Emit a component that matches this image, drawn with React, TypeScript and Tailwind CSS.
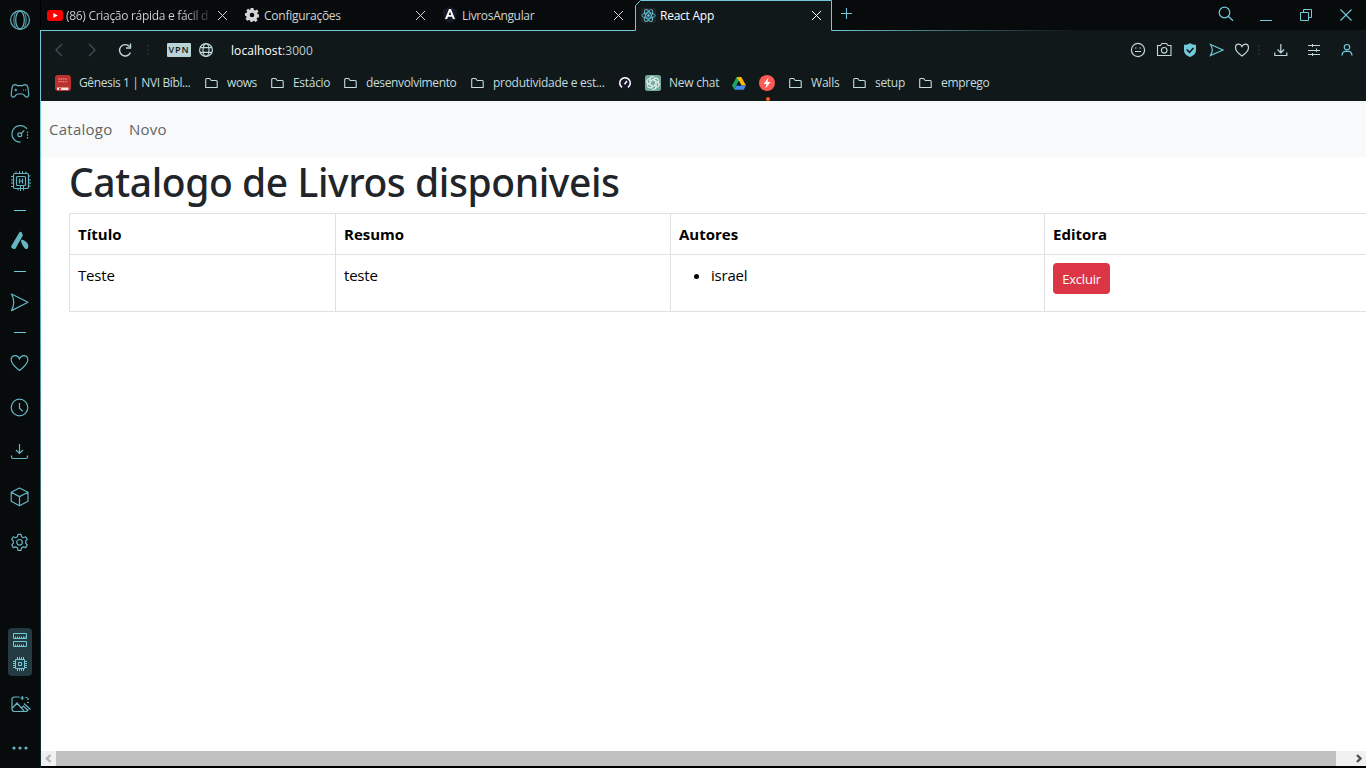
import React from 'react';

type Kids = { children?: React.ReactNode };

function Icon({ w = 20, h = 20, cls = '', sw = 1.2, children }: Kids & { w?: number; h?: number; cls?: string; sw?: number }) {
  return (
    <svg width={w} height={h} viewBox={`0 0 ${w} ${h}`} className={`block shrink-0 ${cls}`} fill="none" stroke="currentColor" strokeWidth={sw}>
      {children}
    </svg>
  );
}

const Dash = ({ cls }: { cls: string }) => <div className={`h-px w-3 shrink-0 bg-[#71c9d9] ${cls}`} />;

function Sidebar() {
  return (
    <aside className="flex h-[768px] w-10 shrink-0 flex-col items-center bg-[#080b0c] text-[#65b5c3]">
      <Icon cls="mt-[10px]">
        <circle cx="10" cy="10" r="9.4" />
        <ellipse cx="10" cy="10" rx="4.3" ry="8.8" />
        <path d="M5.8 2.3C3.2 6 3.2 14 5.8 17.7M14.2 2.3c2.6 3.7 2.6 11.7 0 15.4" strokeWidth="0.9" />
      </Icon>
      <Icon cls="mt-[51px]">
        <path d="M5.500 3.700c-2.200 0-3 .8-3.400 2.800L1.300 12.500c-.3 2.400.6 3.700 2 3.700 2.100 0 2.500-3.200 4.200-3.200h5c1.700 0 2.100 3.200 4.200 3.200 1.400 0 2.300-1.300 2-3.700L17.900 6.500c-.4-2-1.200-2.800-3.400-2.800-1.200 0-1.500.9-2.500.9H8c-1 0-1.300-.9-2.500-.9z" />
        <path d="M5.800 7.700v2.600M4.500 9h2.600M13 9h1M15 9h1" />
      </Icon>
      <Icon cls="mt-[23px]">
        <path d="M17 5A8.300 8.300 0 1 0 10.500 18.200" />
        <circle cx="9.800" cy="10.800" r="1.900" />
        <path d="m11.300 9.300 3-3" />
        <path d="M17.500 7.500v7" strokeDasharray="1.500 1.300" />
      </Icon>
      <Icon w={22} h={22} cls="mt-[26px] ml-[2px]">
        <rect x="3.500" y="3.500" width="15" height="15" rx="1.500" />
        <rect x="6.500" y="6.500" width="9" height="9" rx="1" />
        <path d="M9.500 8.500v5M12.500 8.500v5M9.500 11h3" />
        <path d="M6 1.500v2M9.500 1v2.500M12.500 1v2.500M16 1.500v2M1 6.500h2.500M1 10h2.500M1 13h2.500M1 16.500h2.500M18.500 6h2M18.500 10h2.500M18.500 13h2.500M18.500 16h2M8 18.500v2M10.500 15.500V21M13.500 15.500v5" strokeWidth="1" />
      </Icon>
      <Dash cls="mt-[18px]" />
      <Icon cls="mt-[20px]" sw={0}>
        <path d="M9.300 1.500c.5-1 2-1 2.500 0l.9 2.200c.2.400.1.800-.1 1.200L5.700 17.300c-.5.900-1.400 1-2.200.600l-1.600-1c-.7-.5-.9-1.300-.5-2.100zM12.200 8.700c2.500.300 6.500 3.500 6.200 6.700-.2 2.400-2 3.500-3.500 2-1.500-1.400-4.400-6.500-3.800-8.200.2-.4.600-.5 1.100-.5z" fill="currentColor" />
      </Icon>
      <Dash cls="mt-[20px]" />
      <Icon cls="mt-[20px]"><path d="M1.500 2 18 10.300 1.500 18.600C4.800 12.500 4.800 8 1.500 2z" strokeLinejoin="round" /></Icon>
      <Dash cls="mt-[20px]" />
      <Icon cls="mt-[20px]">
        <path d="M9.500 17.500C5 14 1.200 10.800 1.200 7c0-2.600 1.700-4.300 4-4.300 2 0 3.500 1.200 4.300 3.200.8-2 2.300-3.200 4.300-3.200 2.300 0 4 1.700 4 4.300 0 3.800-3.800 7-8.300 10.500z" />
      </Icon>
      <Icon cls="mt-[25px]">
        <circle cx="9.500" cy="9.500" r="8.300" />
        <path d="M9.500 5v5.200l3.300 3" />
      </Icon>
      <Icon cls="mt-[24px]">
        <path d="M9.500 2v9M6 8l3.500 3.500L13 8M1.500 13.500V15q0 1.500 1.500 1.500h13q1.500 0 1.500-1.500v-1.500" />
      </Icon>
      <Icon cls="mt-[25px]">
        <path d="M9.500 1 18 5.300v9L9.500 18.700 1.200 14.300v-9zM1.200 5.300l8.300 4.300L18 5.300M9.500 9.600v9" strokeLinejoin="round" />
      </Icon>
      <Icon cls="mt-[25px]">
        <circle cx="9.500" cy="10.300" r="2.800" />
        <path d="M8 2.300h3l.6 2.500 1.700.9 2.400-.900 1.500 2.600-1.500 1.800v2l1.500 1.800-1.500 2.600-2.400-.7-1.700.9-.6 2.500H8l-.6-2.500-1.700-.900-2.400.7-1.500-2.600 1.500-1.800v-2L1.800 7.400l1.500-2.600 2.400.900 1.700-.9z" strokeLinejoin="round" />
      </Icon>
      <div className="mt-[76px] flex h-12 w-6 shrink-0 flex-col items-center rounded bg-[#243b42] text-[#71c9d9]">
        <Icon w={14} h={14} cls="mt-[5px]" sw={1}>
          <path d="M.5.500h13v5H.5zM.5 8.500h13v5H.5z" />
          <path d="M2.500 5V3.500M4.500 5V3.500M6.500 5V3.500M8.500 5V3.500M10.500 5V3.500M12 5V3.500M2.500 13v-1.500M4.500 13v-1.500M6.500 13v-1.500M8.500 13v-1.500M10.500 13v-1.500" />
        </Icon>
        <Icon w={14} h={14} cls="mt-[10px]" sw={1}>
          <path d="M2.500 2.500h9v9h-9zM5.500 5.500h3v3h-3z" />
          <path d="M4.500 0v2M6.500 0v2M8.500 0v2M10.500 0v2M4.500 12v2M6.500 12v2M8.500 12v2M10.500 12v2M0 4.500h2M0 6.500h2M0 8.500h2M0 10.500h2M12 4.500h2M12 6.500h2M12 8.500h2M12 10.500h2" />
        </Icon>
      </div>
      <Icon cls="mt-[19px] ml-px">
        <path d="M8.500 2H3.500Q1 2 1 4.500v9.500Q1 16.500 3.500 16.500h11q2.500 0 2.500-2.500M1.500 13 6 8l7 8M10 13.500l2.500-2.500 4.500 4.500M13 8.500l6.500 6M11.300 1v4M9.300 3h4M14.500 2.500h2M17 3v2M16 7.500h2" />
      </Icon>
      <svg width="16" height="4" viewBox="0 0 16 4" className="mt-[31px] block shrink-0" fill="#65b5c3">
        <circle cx="2" cy="2" r="1.600" /><circle cx="8" cy="2" r="1.600" /><circle cx="14" cy="2" r="1.600" />
      </svg>
    </aside>
  );
}

const Close = ({ cls }: { cls: string }) => (
  <Icon w={11} h={11} cls={cls} sw={1}><path d="m1 1 9 9M10 1l-9 9" /></Icon>
);

function Tabs() {
  return (
    <div className="flex h-[31px] shrink-0 bg-[#080b0c] text-xs leading-[31px] text-[#d2d5d6]">
      <div className="flex w-[594px] shrink-0 items-center border-b border-[#71c9d9]">
        <div className="flex w-[198px] items-center">
          <svg width="16" height="11" viewBox="0 0 16 11" className="ml-[6px] block shrink-0"><rect width="16" height="11" rx="3" fill="#f00" /><path d="m6.300 3 4.500 2.500L6.300 8z" fill="#fff" /></svg>
          <span className="ml-[3px] w-[148px] bg-linear-to-r from-[#d2d5d6] from-80% to-[#181b1c] bg-clip-text whitespace-nowrap text-transparent tracking-[-0.3px]">(86) Criação rápida e fácil d</span>
          <Close cls="ml-[3px]" />
        </div>
        <div className="flex w-[198px] items-center">
          <Icon w={14} h={14} cls="ml-[6px]" sw={0}>
            <path fillRule="evenodd" fill="currentColor" d="M5.600 0h2.800l.5 2 1.100.5 2-.9 1.500 1.900L12.200 5l.2 1.100 1.600.5v2.600l-1.900.5-.5 1 .9 1.800-2 1.400-1.600-1.200-1 .300-.6 1H5.600l-.500-1.500-1.100-.5-1.800.800-1.700-2 1.100-1.600L1.400 8.300 0 7.800V5.300l1.700-.5.500-1-.9-1.700L3.400.7 4.800 2l.400-.2zM7 4.700a2.300 2.300 0 1 0 0 4.600 2.300 2.300 0 0 0 0-4.600z" />
          </Icon>
          <span className="ml-[5px] w-[151px] tracking-[-0.25px]">Configurações</span>
          <Close cls="" />
        </div>
        <div className="flex w-[198px] items-center">
          <svg width="14" height="16" viewBox="0 0 14 16" className="ml-[6px] block shrink-0"><path d="M7 0 14 3l-1 10-6 3-6-3L0 3z" fill="#171b27" /><path d="M6 2h2l4 10H9.900L9 9.700H5L4.100 12H2zM7 4.500 5.700 8h2.600z" fill="#fff" fillRule="evenodd" /></svg>
          <span className="ml-[5px] w-[151px] tracking-[-0.33px]">LivrosAngular</span>
          <Close cls="" />
        </div>
      </div>
      <div className="relative flex w-[197px] shrink-0 items-center bg-[#111819] text-white">
        <svg width="198" height="31" viewBox="0 0 198 31" className="absolute top-0 left-0"><path d="M0 0v30.500h.5V5.500L6 .5H0z" fill="#080b0c" /><path d="M-.5 30.500H.5V5.500L5.500.500h191v30h1.500" fill="none" stroke="#71c9d9" /></svg>
        <svg width="15" height="15" viewBox="0 0 15 15" className="relative ml-[6px] block shrink-0" fill="none" stroke="#61c3df" strokeWidth="0.9"><rect width="15" height="15" rx="2" fill="#242424" stroke="none" /><ellipse cx="7.500" cy="7.500" rx="6.600" ry="2.700" /><ellipse cx="7.500" cy="7.500" rx="6.600" ry="2.700" transform="rotate(60 7.500 7.500)" /><ellipse cx="7.500" cy="7.500" rx="6.600" ry="2.700" transform="rotate(120 7.500 7.500)" /><circle cx="7.500" cy="7.500" r="1" fill="#61c3df" /></svg>
        <span className="relative ml-[4px] w-[151px] tracking-[-0.25px]">React App</span>
        <Close cls="relative" />
      </div>
      <div className="flex h-[31px] w-[534px] shrink-0 flex-col">
        <div className="flex h-[30px] text-[#71c9d9]">
          <Icon w={12} h={12} cls="mt-[8px] ml-[9px]" sw={1}><path d="M5.500 0v11M0 5.500h11" /></Icon>
          <Icon w={16} h={16} cls="mt-[6px] ml-[365px]"><circle cx="6.500" cy="6.500" r="5.300" /><path d="m10.300 10.300 4.700 4.500" /></Icon>
          <div className="mt-[20px] ml-[26px] h-px w-3 bg-[#71c9d9]" />
          <Icon w={13} h={13} cls="mt-[9px] ml-[28px]" sw={1}><path d="M.5 3.500h8v8h-8zM3.500 3.500v-3h8v8h-3" /></Icon>
          <Icon w={13} h={13} cls="mt-[9px] ml-[27px]" sw={1.1}><path d="m.5.500 11 11M11.500.5.500 11.500" /></Icon>
        </div>
        <div className="h-px bg-linear-to-r from-[#71c9d9] to-[#111819] to-45%" />
      </div>
    </div>
  );
}

const Dots = ({ cls }: { cls: string }) => (
  <div className={`flex flex-col gap-[2px] ${cls}`}><i className="size-[2px] bg-[#1e2c2e]" /><i className="size-[2px] bg-[#1e2c2e]" /><i className="size-[2px] bg-[#1e2c2e]" /></div>
);

function Toolbar() {
  return (
    <div className="flex h-[38px] shrink-0 items-center text-[#c0d8dc]">
      <Icon w={10} h={14} cls="ml-[13px] text-[#405054]" sw={1.3}><path d="M8 1 2 7l6 6" /></Icon>
      <Icon w={10} h={14} cls="ml-[23px] text-[#405054]" sw={1.3}><path d="m2 1 6 6-6 6" /></Icon>
      <Icon w={16} h={16} cls="ml-[20px]" sw={1.4}><path d="M12.500 4.500a5.700 5.700 0 1 0 1 6M13.500 1.500V6H9" /></Icon>
      <Dots cls="ml-[14px]" />
      <span className="ml-[18px] h-[14px] w-6 rounded-[1px] bg-[#bad3d7] text-center text-[9px] leading-[14px] font-semibold tracking-[0.9px] text-[#111819]">VPN</span>
      <Icon w={14} h={14} cls="ml-[8px]"><circle cx="7" cy="7" r="6.400" /><ellipse cx="7" cy="7" rx="3" ry="6.400" /><path d="M1.200 4.700h11.600M1.200 9.300h11.600" /></Icon>
      <span className="mt-[2px] ml-[18px] w-[899px] text-xs tracking-[0.08px] text-[#b9cdd0]"><span className="text-white">localhost</span>:3000</span>
      <Icon w={16} h={16}><circle cx="8" cy="8" r="6.600" /><path d="M5 9.500h6M5 6h1.500M9.500 6H11" /></Icon>
      <Icon w={16} h={16} cls="ml-[10px]" sw={1.100}><path d="M1.500 3.500h3l1.500-2h4.500l1.500 2h3v10h-13.500z" /><circle cx="8.200" cy="8.300" r="2.800" /></Icon>
      <svg width="14" height="14" viewBox="0 0 14 14" className="ml-[11px] block shrink-0"><path d="M7 0c2 1.500 4 1.700 6 1.800V7c0 4-2.500 5.500-6 7-3.500-1.500-6-3-6-7V1.800C3 1.700 5 1.500 7 0z" fill="#71c9d9" /><path d="m3.700 6.500 2.800 2.800 4-4.300" fill="none" stroke="#111819" strokeWidth="1.600" /></svg>
      <Icon w={16} h={16} cls="ml-[12px] text-[#71c9d9]"><path d="M1.500 2.500 14 8 1.500 13.500C4 9 4 7 1.500 2.500z" /></Icon>
      <Icon w={16} h={16} cls="ml-[9px]"><path d="M8 14C4.500 11.500 1.500 9 1.500 5.700c0-2 1.300-3.500 3.100-3.500C6.200 2.200 7.300 3 8 4.500c.7-1.500 1.800-2.300 3.400-2.300 1.800 0 3.100 1.500 3.100 3.500C14.500 9 11.500 11.500 8 14z" /></Icon>
      <Dots cls="ml-[8px]" />
      <Icon w={14} h={14} cls="ml-[14px]"><path d="M6.800 1v8.500M3.500 6.500l3.300 3.300 3.300-3.300M.8 9.500v3h12v-3" /></Icon>
      <Icon w={14} h={14} cls="ml-[19px]" sw={1}><path d="M1 2.500h12M1 7.500h12M1 11.500h12M5.500 1v3M9.500 5.500v3.500M5.500 10v3" /></Icon>
      <Icon w={12} h={14} cls="ml-[20px] text-[#71c9d9]"><circle cx="6" cy="4.200" r="2.700" /><path d="M1 12.500c0-2 1-3.500 2.800-4.200M11 12.500c0-2-1-3.500-2.800-4.200M3.600 8.400h4.800" /></Icon>
    </div>
  );
}

const Folder = ({ cls }: { cls: string }) => (
  <Icon w={13} h={12} cls={cls} sw={1.100}><path d="M.7 10.500v-8q0-1 1-1h3l1.500 2h5q1 0 1 1v6z" strokeLinejoin="round" /></Icon>
);

function Bookmarks() {
  return (
    <div className="relative flex h-[32px] shrink-0 items-center pb-[4px] text-xs whitespace-nowrap text-[#c3dcdf]">
      <svg width="16" height="16" viewBox="0 0 16 16" className="ml-[14px] block shrink-0"><rect width="16" height="16" rx="3" fill="#b93230" /><path d="M3.500 4h9M3.500 6.700h9" stroke="#dd8580" strokeWidth="1.300" strokeDasharray="1.500 .7" /><path d="M2 12.500h11.500v2.500H3q-1 0-1-1z" fill="#f2e8e7" /><path d="M4 13h2v3H4z" fill="#e1393a" /></svg>
      <span className="ml-[8px] w-[126px] tracking-[-0.38px]">Gênesis 1 | NVI Bíbl...</span>
      <Folder cls="" /><span className="ml-[9px] w-[44px] tracking-[-0.4px]">wows</span>
      <Folder cls="" /><span className="ml-[9px] w-[51px] tracking-[-0.3px]">Estácio</span>
      <Folder cls="" /><span className="ml-[9px] w-[105px] tracking-[-0.36px]">desenvolvimento</span>
      <Folder cls="" /><span className="ml-[9px] w-[125px] tracking-[-0.28px]">produtividade e est...</span>
      <Icon w={14} h={14} sw={1.500} cls="text-white"><circle cx="7" cy="7" r="7" fill="#16162b" stroke="none" /><path d="M4 11.300a5.300 5.300 0 1 1 6 0M6.500 8.300 9 5" /></Icon>
      <svg width="16" height="16" viewBox="0 0 16 16" className="ml-[13px] block shrink-0"><rect width="16" height="16" rx="2.500" fill="#74aa9c" /><g fill="none" stroke="#e9f3f0" strokeWidth="0.900">{[0, 60, 120, 180, 240, 300].map((a) => <path key={a} transform={`rotate(${a} 8 8)`} d="M5.200 8.200V4.400a2.500 2.500 0 0 1 4.600-1.700M6.500 6.700V5.200L9.800 3.300a2.500 2.500 0 0 1 3.200 1" />)}</g></svg>
      <span className="ml-[8px] w-[63px] tracking-[-0.25px]">New chat</span>
      <svg width="14" height="13" viewBox="0 0 14 13" className="block shrink-0"><path d="M4.700 0H9L4.500 8.300 2.300 12.500 0 8.500z" fill="#1da462" /><path d="M4.700 0H9.300L14 8.500H9.500z" fill="#ffba00" /><path d="M4.500 8.500H14l-2.300 4.200H2.300z" fill="#4688f4" /><path d="M7 4.200 4.600 8.500h4.800z" fill="#111819" /></svg>
      <svg width="16" height="16" viewBox="0 0 16 16" className="ml-[13px] block shrink-0"><circle cx="8" cy="8" r="8" fill="#ff5a56" /><path d="M9.500 2.500 4.500 9h3L6.500 13.500 11.500 7h-3z" fill="#fff" /></svg>
      <Folder cls="ml-[14px]" /><span className="ml-[9px] w-[42px] tracking-[-0.2px]">Walls</span>
      <Folder cls="" /><span className="ml-[9px] w-[44px] tracking-[-0.3px]">setup</span>
      <Folder cls="" /><span className="ml-[9px] tracking-[-0.3px]">emprego</span>
      <i className="absolute top-[28px] left-[725px] size-[4px] rounded-full bg-[#ff5b14]" />
    </div>
  );
}

const th = 'border border-[#dee2e6] p-0 pl-2 text-left font-bold';
const td = 'border border-[#dee2e6] p-0 pt-2 pl-2 text-left align-top tracking-[-0.2px]';

function Page() {
  return (
    <main className="flex h-[650px] shrink-0 flex-col overflow-hidden bg-white text-[16px] leading-6 text-black">
      <nav className="flex h-14 shrink-0 items-center gap-4 bg-[#f8f9fa] px-2 pb-px text-[15px] text-[#636464]">
        <a className="w-16 tracking-[0.25px]">Catalogo</a>
        <a className="tracking-[0.25px]">Novo</a>
      </nav>
      <h1 className="ml-7 h-14 shrink-0 pt-px font-['Noto_Sans','Open_Sans',sans-serif] text-[39px] leading-[48px] font-medium tracking-[-0.42px] whitespace-nowrap text-[#212529]">Catalogo de Livros disponiveis</h1>
      <table className="ml-7 w-[1349px] shrink-0 table-fixed border-collapse text-[15px]">
        <colgroup><col className="w-[266px]" /><col className="w-[335px]" /><col className="w-[374px]" /><col className="w-[374px]" /></colgroup>
        <thead>
          <tr className="h-[41px]"><th className={th}>Título</th><th className={th}>Resumo</th><th className={th}>Autores</th><th className={th}>Editora</th></tr>
        </thead>
        <tbody>
          <tr className="h-[57px]">
            <td className={td}>Teste</td>
            <td className={td}>teste</td>
            <td className={td}><ul className="list-disc pl-8"><li>israel</li></ul></td>
            <td className={td}><button className="block h-[31px] w-[57px] rounded bg-[#dc3545] pt-px text-[13px] text-white">Excluir</button></td>
          </tr>
        </tbody>
      </table>
      <div className="grow" />
    </main>
  );
}

export default function App() {
  return (
    <div className="flex h-[768px] w-[1366px] overflow-hidden bg-black font-['Open_Sans','Noto_Sans',sans-serif]">
      <Sidebar />
      <div className="mt-[30px] w-px shrink-0 bg-linear-to-b from-[#71c9d9] from-30% to-[#14272a] to-90%" />
      <div className="flex w-[1325px] shrink-0 flex-col bg-[#111819]">
        <Tabs />
        <Toolbar />
        <Bookmarks />
        <Page />
        <div className="flex h-[15px] shrink-0 items-center bg-[#f0f0f0]">
          <Icon w={15} h={15} cls="text-[#b5b5b5]" sw={2.4}><path d="M9.500 4 6 7.500 9.500 11" /></Icon>
          <div className="h-[15px] w-[1280px] bg-[#c1c1c1]" />
          <Icon w={15} h={15} cls="ml-[15px] text-[#505050]" sw={2.4}><path d="m6 4 3.500 3.500L6 11" /></Icon>
        </div>
        <div className="h-[2px] shrink-0 bg-black" />
      </div>
    </div>
  );
}
